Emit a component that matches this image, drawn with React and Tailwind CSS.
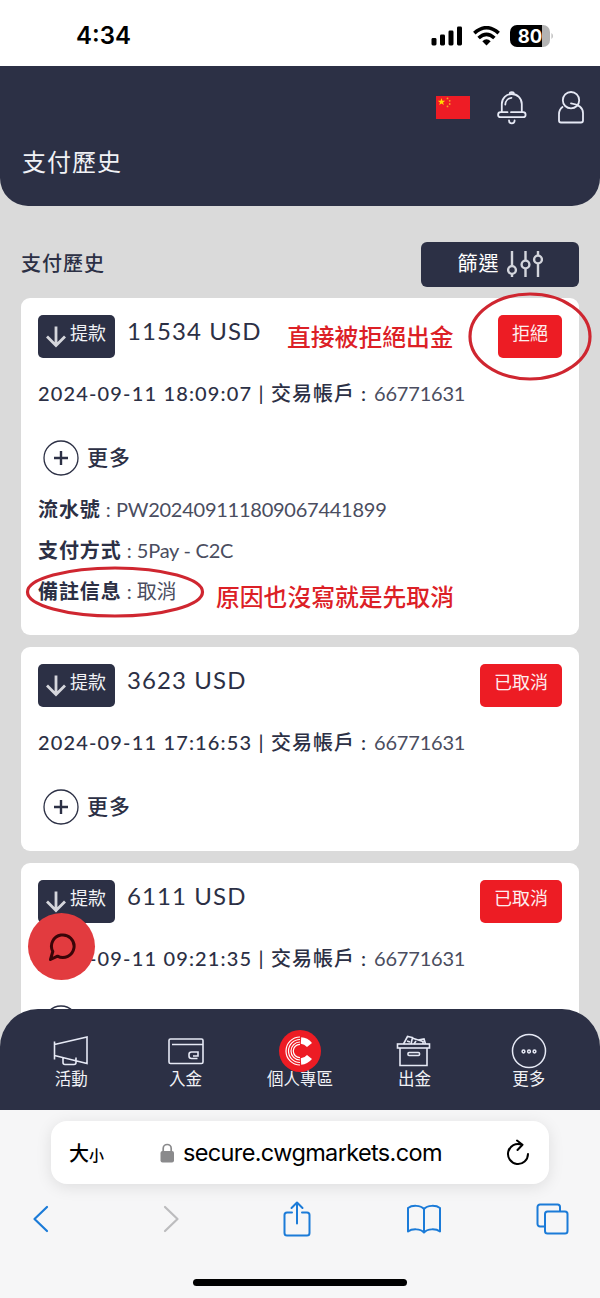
import { useState } from "react";

const CARDS = [
  {
    amount: "11534 USD",
    time: "2024-09-11 18:09:07",
    account: "66771631",
    status: "拒絕",
    details: [
      { label: "流水號", value: "PW202409111809067441899" },
      { label: "支付方式", value: "5Pay - C2C" },
      { label: "備註信息", value: "取消" },
    ],
  },
  { amount: "3623 USD", time: "2024-09-11 17:16:53", account: "66771631", status: "已取消" },
  { amount: "6111 USD", time: "2024-09-11 09:21:35", account: "66771631", status: "已取消" },
];

const StatusBar = () => (
  <div className="flex h-[66px] shrink-0 items-center justify-between bg-white pt-[5px] pr-[46px] pl-[76px]">
    <span className="pt-[1px] font-[Inter,sans-serif] text-[24px] font-semibold text-black">4:34</span>
    <div className="flex items-center gap-[10px]">
      <svg width="32" height="20" viewBox="0 0 32 20">
        <rect x="0.5" y="12" width="5" height="7.5" rx="1.4" />
        <rect x="9" y="8.5" width="5" height="11" rx="1.4" />
        <rect x="17.5" y="4.5" width="5" height="15" rx="1.4" />
        <rect x="26" y="0.5" width="5" height="19" rx="1.4" />
      </svg>
      <svg width="27" height="20" viewBox="0 0 27 20" fill="none" stroke="#000" strokeWidth="3.6">
        <path d="M1.3 7.2 Q13.5 -3.8 25.7 7.2" />
        <path d="M5.6 12 Q13.5 4.6 21.4 12" />
        <path d="M9.3 15.3 Q13.5 11.4 17.7 15.3 L13.5 19.6 Z" fill="#000" stroke="none" />
      </svg>
      <svg width="44" height="22" viewBox="0 0 44 22">
        <path d="M7 0H32V22H7A7 7 0 0 1 0 15V7A7 7 0 0 1 7 0Z" />
        <path d="M32 0h1a7 7 0 0 1 7 7v8a7 7 0 0 1-7 7h-1Z" fill="#b3b3b3" />
        <path d="M41.5 8a4 4 0 0 1 0 6Z" fill="#b3b3b3" />
        <text x="20" y="17.6" textAnchor="middle" fill="#fff" fontSize="18.5" fontWeight="700" fontFamily="Inter, sans-serif">
          80
        </text>
      </svg>
    </div>
  </div>
);

const Flag = () => (
  <svg width="34" height="23" viewBox="0 0 34 23">
    <rect width="34" height="23" fill="#ee1c25" />
    <path d="M5.5 2l.9 2.7h2.8L7 6.4l.8 2.7-2.3-1.6-2.3 1.6.8-2.7-2.2-1.7h2.8Z" fill="#ffde00" />
    <g fill="#f5a623">
      <circle cx="11.5" cy="2.4" r="0.9" />
      <circle cx="13.7" cy="4.8" r="0.9" />
      <circle cx="13.7" cy="8" r="0.9" />
      <circle cx="11.5" cy="10.4" r="0.9" />
    </g>
  </svg>
);

const Bell = () => (
  <svg width="30" height="34" viewBox="0 0 30 34" fill="none" stroke="#e6e9f5" strokeWidth="1.8" strokeLinecap="round">
    <path d="M4.8 21V13a10 10 0 0 1 20 0v8" />
    <path d="M12.8 2.6a2 1.5 0 0 1 4 0" />
    <path d="M8.3 13.5a7 7 0 0 1 6.2-6.7" />
    <path d="M10.5 21.2H3.6a2.5 2.5 0 0 0 0 5h22.5a2.5 2.5 0 0 0 0-5H14" />
    <path d="M12 29.5a2.8 2.8 0 0 0 5.6 0" />
  </svg>
);

const User = () => (
  <svg width="26" height="33" viewBox="0 0 26 33" fill="none" stroke="#e6e9f5" strokeWidth="1.8" strokeLinecap="round">
    <circle cx="13" cy="9.2" r="8.2" />
    <path d="M4.5 16C2.4 17.600 1 20 1 23.2V29.5a2 2 0 0 0 2 2h20a2 2 0 0 0 2-2V22c0-5-4.500-9-12-9.700" />
  </svg>
);

const Header = () => (
  <header className="relative z-10 flex h-[140px] shrink-0 flex-col rounded-b-[28px] bg-[#2c3045] px-[22px]">
    <div className="-mr-[6px] flex h-[83px] items-center justify-end">
      <Flag />
      <div className="ml-[27px]">
        <Bell />
      </div>
      <div className="ml-[31px]">
        <User />
      </div>
    </div>
    <h1 className="-mt-[5px] text-[24px] leading-[36px] tracking-[1px] text-[#f1f2f6]">支付歷史</h1>
  </header>
);

const FilterIcon = () => (
  <svg className="-mt-[2px]" width="36" height="28" viewBox="0 0 36 28" fill="none" stroke="#d3d5dc" strokeWidth="2.4">
    <path d="M5 1v15M5 24v3M18.5 1v9.5M18.5 18.5v8.5M31 1v4.5M31 13.5v13.5" />
    <circle cx="5" cy="20" r="3.9" />
    <circle cx="18.5" cy="14.5" r="3.9" />
    <circle cx="31" cy="9.5" r="3.9" />
  </svg>
);

const More = ({ open, onClick }) => (
  <button onClick={onClick} aria-expanded={open} className="mt-[33px] ml-[5px] flex h-[36px] items-center gap-[8px]">
    <svg width="36" height="36" viewBox="0 0 36 36" fill="none" stroke="#2c3045">
      <circle cx="18" cy="18" r="17" strokeWidth="1.3" />
      <path d="M11 18h14M18 11v14" strokeWidth="2.4" />
    </svg>
    <span className="-mt-[2px] text-[21px] leading-[36px] font-medium tracking-[1px]">更多</span>
  </button>
);

const Card = ({ card }) => {
  const [open, setOpen] = useState(Boolean(card.details));

  return (
    <div className="rounded-[9px] bg-white px-[17px] pt-[17px] pb-[26px]">
      <div className="flex h-[43px] items-start">
        <div className="flex h-[43px] w-[77px] rounded-[5px] bg-[#2c3045] pl-[8px] text-white">
          <svg className="mt-[11px]" width="20" height="22" viewBox="0 0 20 22" fill="none" stroke="#d5d6dc" strokeWidth="2.8">
            <path d="M10 0.5v19M1 10.5l9 9 9-9" />
          </svg>
          <span className="ml-[4px] text-[18px] leading-[37px] text-[#f1f2f6]">提款</span>
        </div>
        <span className="ml-[12px] text-[24px] leading-[32px] tracking-[1.1px]">{card.amount}</span>
        <div className="ml-auto h-[43px] rounded-[5px] bg-[#ed1c24] px-[14px] text-[18px] leading-[37px] text-[#fdeeee]">
          {card.status}
        </div>
      </div>

      <div className="mt-[21px] flex h-[28px] items-center whitespace-pre leading-[28px]">
        <span className="text-[20px] font-medium tracking-[1.15px]">{card.time} | </span>
        <span className="text-[20px] font-medium tracking-[1px]">交易帳戶 : </span>
        <span className="ml-[1px] text-[20px] tracking-[-0.2px] text-[#4a4d60]">{card.account}</span>
      </div>

      <More open={open} onClick={() => setOpen(!open)} />

      {open && card.details && (
        <div className="mt-[13px] -mb-[3px] flex flex-col">
          {card.details.map((d) => (
            <div key={d.label} className="h-[41px] text-[20px] leading-[40px] whitespace-pre">
              <span className="font-bold tracking-[0.9px]">{d.label}</span>
              <span className="text-[#4a4d60]"> : </span>
              <span className="tracking-[-0.25px] text-[#4a4d60]">{d.value}</span>
            </div>
          ))}
        </div>
      )}
    </div>
  );
};

const Megaphone = () => (
  <svg width="36" height="30" viewBox="0 0 36 30" fill="none" stroke="#e6e9f5" strokeWidth="1.6">
    <path d="M1.5 5.5v18M1.5 8.5L34 1v26.5L1.5 19.5M10 21.5v5q0 2 2 2h9q2 0 2-2v-5" />
  </svg>
);

const Wallet = () => (
  <svg width="36" height="30" viewBox="0 0 36 30" fill="none" stroke="#e6e9f5" strokeWidth="1.6">
    <rect x="1" y="3" width="34" height="24.5" rx="1.5" />
    <path d="M4 8.5h31M25 20h5V16h-6.5q-2.500 0-2.500 2.500v1.500q0 2.500 2.500 2.500h6" />
  </svg>
);

const Logo = () => (
  <svg width="42" height="42" viewBox="0 0 42 42" fill="none" stroke="#fff">
    <circle cx="21" cy="21" r="21" fill="#ed1c24" stroke="none" />
    <path d="M21 7a14 14 0 0 0 0 28M21 9.5a11.5 11.5 0 0 0 0 23M21 12a9 9 0 0 0 0 18M21 14.3a6.7 6.7 0 0 0 0 13.4" strokeWidth="1.2" />
    <path d="M22 10.5q5 0.300 8.500 4.500M22 31.500q5-.3 8.500-4.500" strokeWidth="6.500" />
  </svg>
);

const Box = () => (
  <svg width="36" height="34" viewBox="0 0 36 34" fill="none" stroke="#e6e9f5" strokeWidth="1.6">
    <rect x="1.5" y="10" width="32" height="4" />
    <path d="M4 14v17.5h27V14M7.500 10L11.5 2.500l5 1L15 10M11 7l3 1M16 4l11 3.500V10M22 6l6-1 1.500 5M18 10l2-3" />
    <rect x="12" y="18.5" width="11.5" height="3" rx="1" />
  </svg>
);

const Dots = () => (
  <svg width="36" height="36" viewBox="0 0 36 36" fill="none" stroke="#e6e9f5" strokeWidth="1.5">
    <circle cx="18" cy="18" r="16.5" />
    <circle cx="12.5" cy="18.5" r="1.4" />
    <circle cx="18" cy="18.5" r="1.4" />
    <circle cx="23.5" cy="18.5" r="1.4" />
  </svg>
);

const TABS = [
  { label: "活動", Icon: Megaphone },
  { label: "入金", Icon: Wallet },
  { label: "個人專區", Icon: Logo },
  { label: "出金", Icon: Box },
  { label: "更多", Icon: Dots },
];

const TabBar = () => (
  <nav className="absolute inset-x-0 bottom-0 z-20 flex h-[101px] rounded-t-[38px] bg-[#2c3045] px-[14px]">
    {TABS.map(({ label, Icon }) => (
      <button key={label} className="flex flex-1 flex-col items-center pt-[21px] text-[16.5px] text-[#f1f2f6]">
        <span className="flex h-[42px] items-center">
          <Icon />
        </span>
        <span className="relative -mt-[5px] leading-[24px] whitespace-nowrap">{label}</span>
      </button>
    ))}
  </nav>
);

const SafariBar = () => (
  <footer className="flex h-[188px] shrink-0 flex-col items-center bg-[#f6f6f7] pt-[11px]">
    <div className="flex h-[63px] w-[498px] items-center rounded-[16px] bg-white pr-[19px] pl-[18px] text-black shadow-[0_3px_16px_rgba(0,0,0,0.1)]">
      <span className="flex w-[36px] items-baseline font-medium whitespace-nowrap">
        <span className="text-[20px]">大</span>
        <span className="text-[15px]">小</span>
      </span>
      <svg className="ml-[55px]" width="15" height="20" viewBox="0 0 15 20">
        <rect x="0.5" y="8" width="13.5" height="11.5" rx="2" fill="#8a8a8c" />
        <path d="M3.2 9V5.5a4 4 0 0 1 8 0V9" fill="none" stroke="#8a8a8c" strokeWidth="1.7" />
      </svg>
      <span className="ml-[8px] font-[Inter,sans-serif] text-[23.5px] tracking-[-0.64px]">secure.cwgmarkets.com</span>
      <svg className="ml-auto" width="24" height="28" viewBox="0 0 24 28" fill="none" stroke="#000" strokeWidth="2" strokeLinecap="round" strokeLinejoin="round">
        <path d="M22 15A10 10 0 1 1 15.500 5.600M11 1.500l5.500 4.200-5 5.300" />
      </svg>
    </div>
    <div className="mt-[15px] flex h-[40px] w-full items-center justify-between pr-[30px] pl-[23px]">
      <span className="flex w-[36px] justify-center">
        <svg width="18" height="28" viewBox="0 0 18 28" fill="none" stroke="#1b7bd8" strokeWidth="2.2" strokeLinecap="round" strokeLinejoin="round">
          <path d="M15 2L2.5 14 15 26" />
        </svg>
      </span>
      <span className="flex w-[36px] justify-center pl-[5px]">
        <svg width="18" height="28" viewBox="0 0 18 28" fill="none" stroke="#bcbcbe" strokeWidth="2.2" strokeLinecap="round" strokeLinejoin="round">
          <path d="M3 2l12.5 12L3 26" />
        </svg>
      </span>
      <span className="flex w-[36px] justify-center">
        <svg width="28" height="36" viewBox="0 0 28 36" fill="none" stroke="#1b7bd8" strokeWidth="2" strokeLinecap="round" strokeLinejoin="round">
          <path d="M9 11.5H4a2.5 2.5 0 0 0-2.5 2.5v18A2.5 2.5 0 0 0 4 34.5h20a2.5 2.5 0 0 0 2.5-2.5V14a2.5 2.5 0 0 0-2.5-2.5h-5M14 22.5V2M8.500 7L14 1.500 19.500 7" />
        </svg>
      </span>
      <span className="flex w-[36px] justify-center">
        <svg width="34" height="30" viewBox="0 0 34 30" fill="none" stroke="#1b7bd8" strokeWidth="2" strokeLinejoin="round">
          <path d="M17 5C13.5 1 5 1 1 4v23.5c4-3 12.500-3 16 1 3.500-4 12-4 16-1V4C29 1 20.500 1 17 5ZM17 5v23.500" />
        </svg>
      </span>
      <span className="flex w-[36px] justify-center">
        <svg width="33" height="32" viewBox="0 0 33 32" fill="none" stroke="#1b7bd8" strokeWidth="2">
          <path d="M9 23.5H4A2.5 2.5 0 0 1 1.5 21V4A2.5 2.5 0 0 1 4 1.5h17.5A2.5 2.5 0 0 1 24 4v4.500" />
          <rect x="9" y="8.5" width="22.5" height="22" rx="2.5" />
        </svg>
      </span>
    </div>
    <div className="mt-[40px] h-[7px] w-[214px] rounded-full bg-black" />
  </footer>
);

// red marker notes drawn over the page
const Annotations = () => (
  <div className="pointer-events-none absolute inset-0 z-30 font-medium text-[#dc2026]">
    <svg className="absolute inset-0" width="600" height="700" fill="none" stroke="#cf2630" strokeWidth="3.2">
      <ellipse cx="530" cy="336.5" rx="60" ry="42.5" />
      <ellipse cx="115" cy="592" rx="87.5" ry="24" />
    </svg>
    <span className="absolute top-[320px] left-[287px] text-[23.8px] leading-[34px] whitespace-nowrap">直接被拒絕出金</span>
    <span className="absolute top-[580px] left-[216px] text-[23.8px] leading-[34px] whitespace-nowrap">原因也沒寫就是先取消</span>
  </div>
);

const App = () => (
  <div className="relative flex h-[1298px] w-[600px] flex-col overflow-hidden bg-[#dadada] font-[Lato,'Noto_Sans_CJK_TC',sans-serif] text-[#2c3045]">
    <StatusBar />
    <Header />
    <main className="relative min-h-0 flex-1 overflow-hidden px-[21px]">
      <div className="mt-[36px] flex h-[45px] items-center justify-between">
        <h2 className="-mt-[3px] text-[20px] font-medium tracking-[1px]">支付歷史</h2>
        <button className="flex h-[45px] w-[158px] items-center justify-center gap-[7px] rounded-[6px] bg-[#2c3045] text-white">
          <span className="-mt-[3px] text-[20px] tracking-[1px]">篩選</span>
          <FilterIcon />
        </button>
      </div>
      <div className="mt-[11px] flex flex-col gap-[12px]">
        {CARDS.map((card) => (
          <Card key={card.time} card={card} />
        ))}
      </div>
      <button className="absolute top-[707px] left-[28px] z-10 flex size-[67px] items-center justify-center rounded-full bg-[#e23b3f]">
        <svg width="28" height="30" viewBox="0 0 28 30" fill="none" stroke="#3a0508" strokeWidth="3" strokeLinecap="round" strokeLinejoin="round">
          <path d="M4.8 19.500A11.300 11.300 0 1 1 9.500 24.200L2.500 27.500Z" />
        </svg>
      </button>
      <TabBar />
    </main>
    <SafariBar />
    <Annotations />
  </div>
);

export default App;
